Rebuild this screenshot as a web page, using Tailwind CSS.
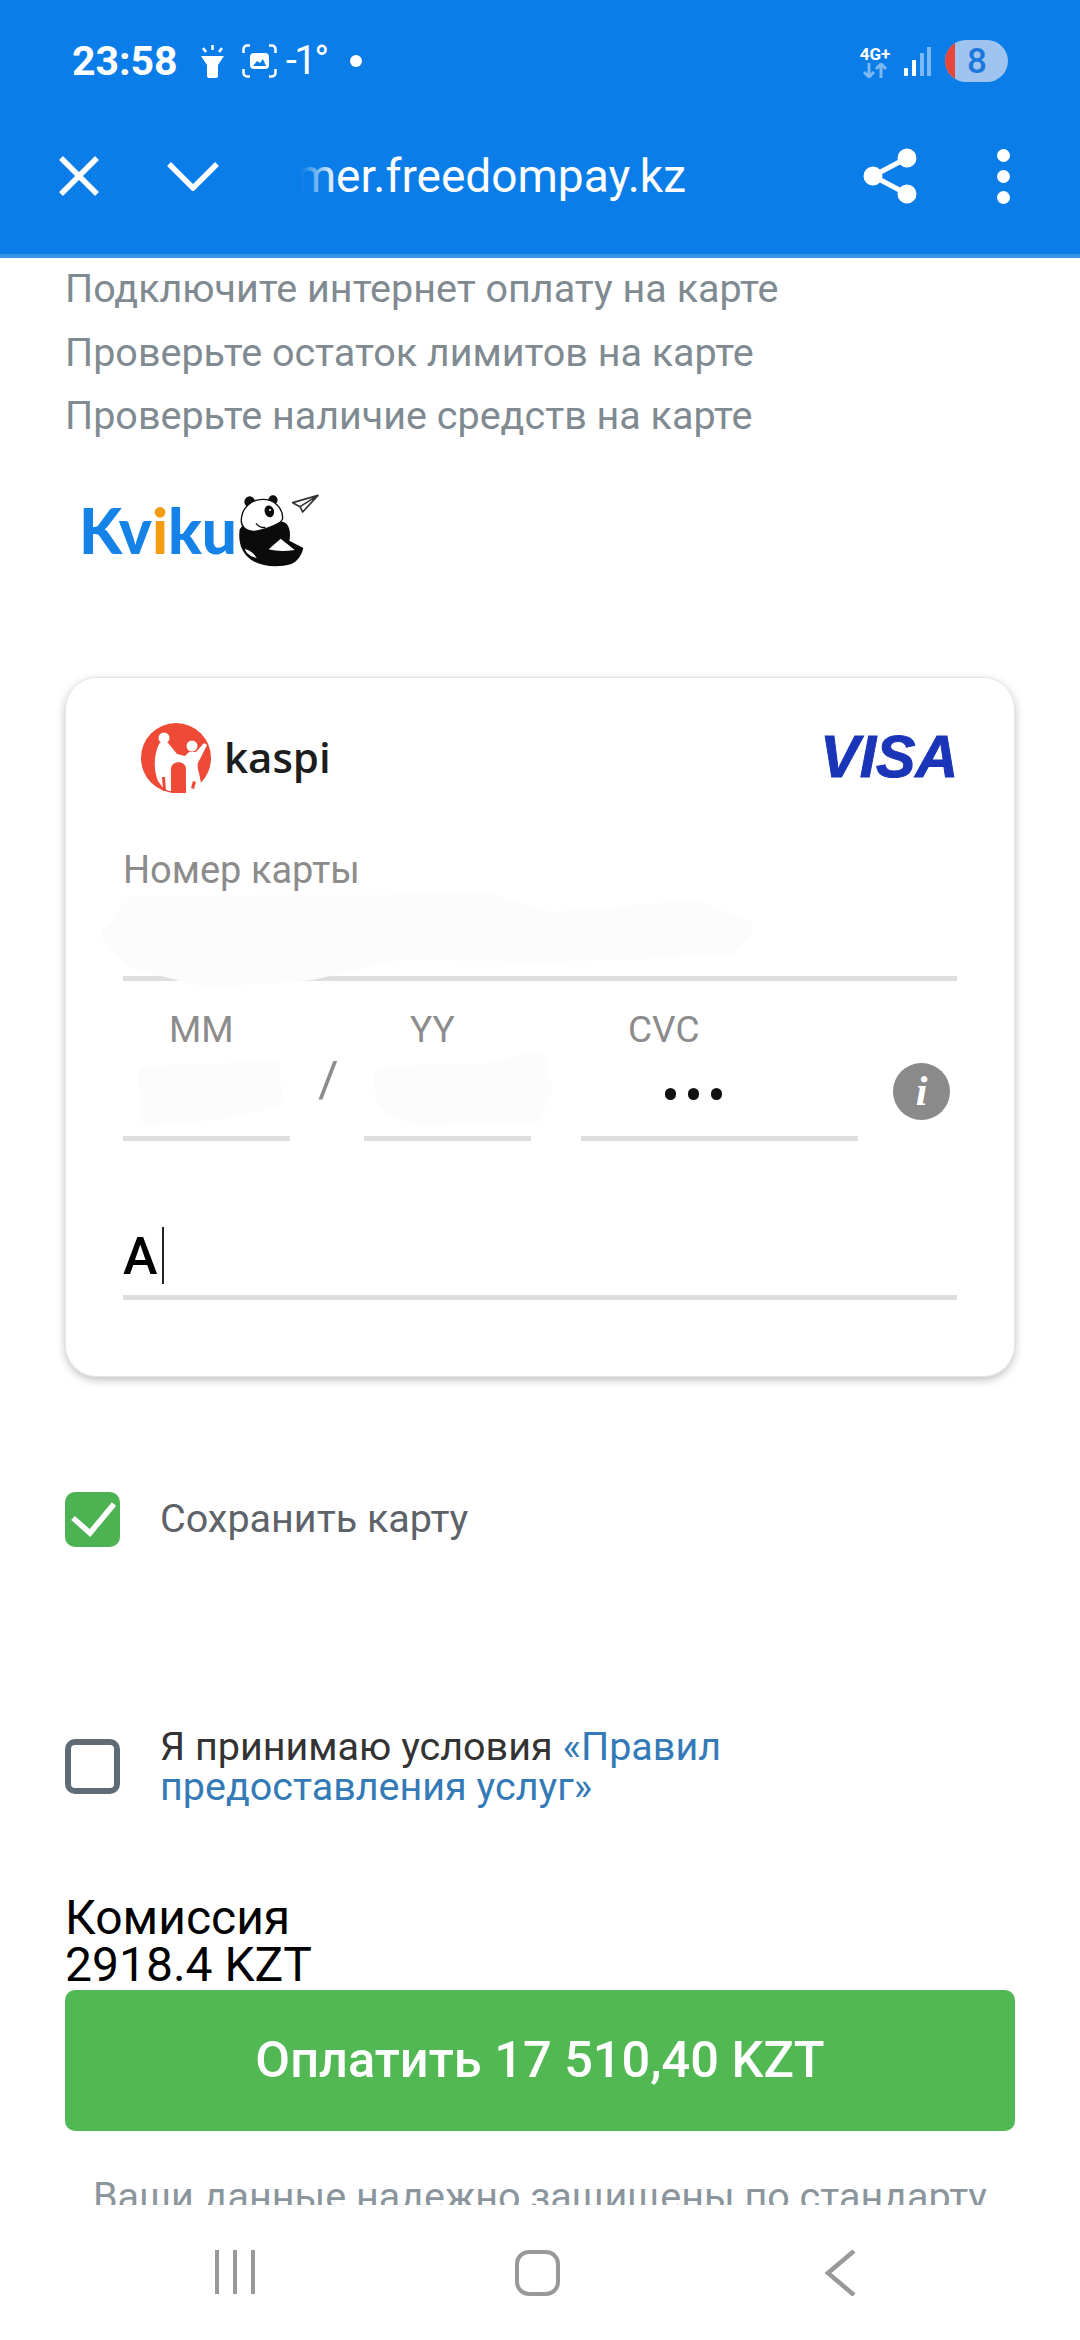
<!doctype html>
<html>
<head>
<meta charset="utf-8">
<script src="https://cdn.jsdelivr.net/npm/@tailwindcss/browser@4"></script>
</head>
<body class="bg-white font-['Roboto',sans-serif]">
<div class="flex flex-col w-[1080px] h-[2340px] overflow-hidden">

    <!-- status bar + custom tab toolbar -->
    <header class="flex-none h-[258px] bg-[#0a7de8] border-b-4 border-[#3a92e6] text-white">
        <div class="h-[122px] flex items-center pl-[72px] pr-[72px]">
            <span class="text-[41px] font-bold leading-none">23:58</span>
            <svg class="ml-[22px]" width="25" height="33" viewBox="0 0 25 33" fill="white">
                <path d="M1 11h23l-6 9v11a2 2 0 0 1-2 2H9a2 2 0 0 1-2-2V20z"/>
                <path d="M12.500 0v5M3 3l3 4M22 3l-3 4" stroke="white" stroke-width="2.500" fill="none"/>
            </svg>
            <svg class="ml-[17px]" width="35" height="34" viewBox="0 0 35 34" fill="none" stroke="white" stroke-width="2.500">
                <path d="M8 1.500H5A3.500 3.500 0 0 0 1.500 5v4M27 1.500h3A3.500 3.500 0 0 1 33.500 5v4M8 32.500H5A3.500 3.500 0 0 1 1.500 29v-4M27 32.500h3a3.500 3.500 0 0 0 3.500-3.500v-4"/>
                <rect x="8" y="9" width="19" height="16" rx="4" fill="white" stroke="none"/>
                <path d="M11 22l4-5 3 2 3-4 3 7z" fill="#0a7de8" stroke="none"/>
            </svg>
            <span class="ml-[9px] text-[40px] leading-none tracking-[-2.500px]">-1°</span>
            <span class="ml-[23px] w-[12px] h-[12px] rounded-full bg-white"></span>
            <div class="ml-auto flex items-center">
                <div class="flex flex-col items-center w-[34px] mr-[12px]">
                    <span class="text-[17px] font-bold leading-[18px]">4G+</span>
                    <svg width="26" height="15" viewBox="0 0 26 15" fill="none" stroke="#7db8f2" stroke-width="3">
                        <path d="M7 0v13M2 9l5 5 5-5M19 15V2M14 6l5-5 5 5"/>
                    </svg>
                </div>
                <svg width="27" height="29" viewBox="0 0 27 29" fill="#7db8f2">
                    <rect x="0" y="21" width="4" height="8" rx="1" fill="white"/>
                    <rect x="8" y="13" width="4" height="16" fill="white"/>
                    <rect x="16" y="6" width="4" height="23"/>
                    <rect x="23" y="0" width="4" height="29"/>
                </svg>
                <div class="ml-[14px] w-[63px] h-[42px] rounded-full bg-[#a0c4f0] overflow-hidden flex items-center">
                    <span class="w-[10px] h-full bg-[#e8463c]"></span>
                    <span class="flex-1 text-center text-[35px] font-medium leading-none text-[#1a78dd] pr-[9px]">8</span>
                </div>
            </div>
        </div>
        <div class="h-[108px] flex items-center pl-[59px] pr-[70px]">
            <svg width="40" height="40" viewBox="0 0 40 40" stroke="white" stroke-width="5.500" fill="none">
                <path d="M2 2l36 36M38 2L2 38"/>
            </svg>
            <svg class="ml-[68px]" width="52" height="30" viewBox="0 0 52 30" stroke="white" stroke-width="5.500" fill="none">
                <path d="M2 3l24 24L50 3"/>
            </svg>
            <div class="ml-[82px] w-[385px] overflow-hidden whitespace-nowrap text-[46px] leading-[56px] flex justify-end relative">
                <span class="flex-none">mer.freedompay.kz</span>
                <span class="absolute left-0 top-0 h-full w-[36px] bg-gradient-to-r from-[#0a7de8] to-transparent"></span>
            </div>
            <svg class="ml-[177px]" width="54" height="56" viewBox="0 0 54 56" fill="white" stroke="white" stroke-width="5">
                <circle cx="44" cy="10" r="7"/>
                <circle cx="10" cy="28" r="7"/>
                <circle cx="44" cy="46" r="7"/>
                <path d="M44 10L10 28l34 18" fill="none"/>
            </svg>
            <div class="ml-auto flex flex-col gap-[8px]">
                <span class="w-[13px] h-[13px] rounded-full bg-white"></span>
                <span class="w-[13px] h-[13px] rounded-full bg-white"></span>
                <span class="w-[13px] h-[13px] rounded-full bg-white"></span>
            </div>
        </div>
    </header>

    <!-- page content -->
    <main class="flex-1 overflow-hidden px-[65px]">
        <div class="text-[39.500px] leading-[63.500px] text-[#7f8a91] -mt-[1px]">
            <p>Подключите интернет оплату на карте</p>
            <p>Проверьте остаток лимитов на карте</p>
            <p>Проверьте наличие средств на карте</p>
        </div>

        <!-- kviku logo -->
        <div class="mt-[45px] ml-[14px] h-[84px] flex items-center">
            <span class="-mt-[10px] font-['Lato',sans-serif] font-black text-[62px] leading-none text-[#1482e6]">Kv<span class="text-[#f39c12]">i</span>ku</span>
            <svg class="-ml-[9px] -mt-[8px]" width="100" height="90" viewBox="0 0 300 270">
                <path d="M35 130C30 170 40 200 70 222c30 20 80 24 120 12 20-8 32-30 36-48l-42-22c4-18 2-36-6-48-10-10-24-12-34-8L90 60z" fill="#0b0b0b"/>
                <circle cx="65" cy="47" r="16" fill="#0b0b0b"/>
                <circle cx="135" cy="42" r="14" fill="#0b0b0b"/>
                <path d="M40 100c2-34 30-60 64-60 36 0 60 26 60 56 0 12-14 18-30 24-20 8-40 16-58 16-22 0-38-14-36-36z" fill="#fff" stroke="#0b0b0b" stroke-width="4"/>
                <ellipse cx="124" cy="76" rx="14" ry="18" fill="#0b0b0b" transform="rotate(-15 124 76)"/>
                <circle cx="126" cy="72" r="3" fill="#fff"/>
                <path d="M84 112c8 10 18 14 28 12" fill="none" stroke="#0b0b0b" stroke-width="4"/>
                <path d="M122 190l36-32 42 34c-26 4-54 4-78-2zM50 190c14 2 28 12 36 26-14-2-30-12-36-26z" fill="#fff"/>
                <path d="M194 50l76-22-46 50-8-16z M216 62l54-34" fill="#fff" stroke="#333" stroke-width="5" stroke-linejoin="round"/>
            </svg>
        </div>

        <!-- card form -->
        <section class="mt-[100px] h-[700px] rounded-[32px] border border-[#e4e4e4] shadow-[0_3px_8px_rgba(0,0,0,0.25)] px-[57px] relative">
            <div class="pt-[45px] h-[122px] flex items-start">
                <svg class="ml-[18px]" width="70" height="70" viewBox="0 0 70 70">
                    <circle cx="35" cy="35" r="35" fill="#ee4a35"/>
                    <path d="M18 21C20 18 26 18 28 21L36 31L44 33L48 29L55 29L63 20L66 22L59 36C56 40 56 44 58 50L60 60L54 65L47 68L28 68L22 65L17 58C13 48 12 34 18 21Z" fill="#fff"/>
                    <circle cx="23" cy="15" r="5.500" fill="#fff"/>
                    <circle cx="51" cy="23" r="5.500" fill="#fff"/>
                    <path d="M30 70V46C30 37 45 37 45 46V70Z" fill="#ee4a35"/>
                    <path d="M21 54h3l1 14h-3zM52 58l3 1-2 7-3-1z" fill="#ee4a35"/>
                </svg>
                <span class="ml-[13px] mt-[6px] font-['Open_Sans',sans-serif] font-semibold text-[42px] leading-[56px] text-[#1d1d1d]">kaspi</span>
                <span class="ml-auto mt-[6px] -mr-[1px] font-['Liberation_Sans',sans-serif] font-bold italic text-[59px] leading-[56px] text-[#1a35b8] [-webkit-text-stroke:1px_#1a35b8]">VISA</span>
            </div>

            <div class="mt-[49px]">
                <label class="block text-[38px] leading-[42px] text-[#8c8c8c]">Номер карты</label>
                <div class="h-[90px] border-b-[5px] border-[#dedede]"></div>
            </div>

            <div class="mt-[28px] flex items-start">
                <div class="w-[167px] h-[132px] border-b-[5px] border-[#dedede] text-[37px] leading-[42px] text-[#8c8c8c] pl-[46px]">MM</div>
                <div class="w-[74px] pt-[41px] pl-[28px] text-[50px] leading-[60px] text-[#8c8c8c]">/</div>
                <div class="w-[167px] h-[132px] border-b-[5px] border-[#dedede] text-[37px] leading-[42px] text-[#8c8c8c] pl-[46px]">YY</div>
                <div class="ml-[50px] w-[277px] h-[132px] border-b-[5px] border-[#dedede] text-[37px] leading-[42px] text-[#8c8c8c] pl-[47px] flex flex-col">
                    <span>CVC</span>
                    <span class="mt-[37px] ml-[37px] flex gap-[12px]">
                        <i class="w-[11px] h-[12px] rounded-full bg-[#111]"></i>
                        <i class="w-[11px] h-[12px] rounded-full bg-[#111]"></i>
                        <i class="w-[11px] h-[12px] rounded-full bg-[#111]"></i>
                    </span>
                </div>
                <span class="ml-[35px] mt-[54px] w-[57px] h-[57px] rounded-full bg-[#8a8a8a] text-white text-center font-['Liberation_Serif',serif] font-bold italic text-[42px] leading-[56px]">i</span>
            </div>

            <div class="mt-[84px] h-[75px] border-b-[5px] border-[#dedede] flex items-start">
                <span class="mt-[2px] text-[52px] font-medium leading-[60px] text-black">А</span>
                <span class="ml-[5px] mt-[2px] w-[2px] h-[57px] bg-[#222]"></span>
            </div>

            <!-- smudges over the entered card data -->
            <svg class="absolute left-0 top-0" width="948" height="500" viewBox="0 0 948 500" fill="#fcfcfc" stroke="#fcfcfc" stroke-width="20" stroke-linejoin="round">
                <path d="M70 228L424 226L485 244L630 232L677 252L660 268L485 274L332 272L246 292L142 300L66 280L45 256Z"/>
                <path d="M82 398L150 396L204 392L206 420L150 432L84 438Z"/>
                <path d="M318 398L420 396L470 384L476 412L466 436L350 438L320 424Z"/>
            </svg>
        </section>

        <!-- options -->
        <label class="mt-[115px] flex items-center">
            <span class="w-[55px] h-[55px] rounded-[10px] bg-[#4db251] flex items-center justify-center">
                <svg width="46" height="36" viewBox="0 0 46 36" fill="none" stroke="#fff" stroke-width="5.500"><path d="M3 17l17 15L44 3"/></svg>
            </span>
            <span class="ml-[40px] text-[39.500px] leading-[42px] text-[#5d6368]">Сохранить карту</span>
        </label>

        <label class="mt-[190px] flex items-start">
            <span class="flex-none mt-[2px] w-[55px] h-[55px] rounded-[10px] border-[6px] border-[#5f6b75]"></span>
            <span class="ml-[40px] -mt-[10px] text-[39.500px] leading-[40px] text-[#333]">Я принимаю условия <span class="text-[#337ab7]">«Правил<br>предоставления услуг»</span></span>
        </label>

        <div class="mt-[87px] text-[48px] leading-[47px] text-black">
            <p>Комиссия</p>
            <p>2918.4 KZT</p>
        </div>

        <button class="mt-[2px] w-[950px] h-[141px] rounded-[10px] bg-[#52b853] text-white text-[50.500px] font-medium">Оплатить 17 510,40 KZT</button>

        <p class="mt-[41px] text-center text-[39.500px] leading-[50px] text-[#8a959c]">Ваши данные надежно защищены по стандарту</p>
    </main>

    <!-- android nav bar -->
    <nav class="flex-none h-[135px] bg-white flex items-start pt-[45px] pl-[215px]">
        <div class="flex gap-[14px]">
            <span class="w-[4px] h-[44px] bg-[#999]"></span>
            <span class="w-[4px] h-[44px] bg-[#999]"></span>
            <span class="w-[4px] h-[44px] bg-[#999]"></span>
        </div>
        <span class="ml-[260px] w-[45px] h-[46px] rounded-[14px] border-[4px] border-[#999]"></span>
        <svg class="ml-[265px]" width="32" height="46" viewBox="0 0 32 46" fill="none" stroke="#999" stroke-width="4.500"><path d="M29 1L3 23l26 22"/></svg>
    </nav>
</div>
</body>
</html>
